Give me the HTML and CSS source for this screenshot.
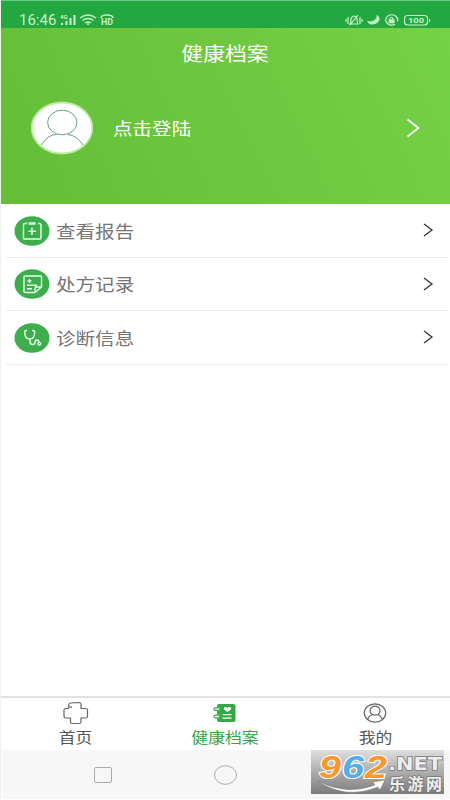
FILE: index.html
```html
<!DOCTYPE html>
<html lang="zh-CN">
<head>
<meta charset="utf-8">
<title>健康档案</title>
<link rel="stylesheet" href="styles.css">
</head>
<body>
<div class="screen">
  <div class="status">
    <span class="clock">16:46</span>
    <svg class="status-left" width="56" height="18" viewBox="0 0 56 18" fill="none" stroke="currentColor">
      <text class="tiny" x="0" y="7.500">4G</text>
      <path stroke-width="2" d="M2 14v-2M6.500 14v-4M10.500 14V7M14.500 14V4"/>
      <path stroke-width="1.400" d="M20 7q8-6 16 0M22.500 9.500q5.500-4 11 0M25 12q3-2 6 0"/>
      <path stroke-width="1.600" d="M41 7q0-3 6-3t6 3"/>
      <text class="hd" x="41" y="14.300" textLength="12" lengthAdjust="spacingAndGlyphs">HD</text>
      <circle cx="28" cy="13" r="1" fill="currentColor" stroke="none"/>
    </svg>
    <svg class="status-right" width="86" height="18" viewBox="0 0 86 18" fill="none" stroke="currentColor" stroke-width="1.200">
      <path d="M1 8v3M3 6v7M15 6v7M17 8v3M5 13q1-1 1-5 1-3 3-3t3 3q0 4 1 5zM5 14L13 4"/>
      <path fill="currentColor" stroke="none" d="M31.500 3.500q5 3.500 2 7-2.500 3.500-7.500 3-3-.5-4-3.500 4.500 1.300 7.500-1t2-5.500z"/>
      <path d="M50 13.300a6 5.200 0 1 1 2.500-3"/>
      <path fill="currentColor" stroke="none" d="M43.500 8.500h6v3.800h-6z"/><path d="M45 9V7.500q1.500-2.500 3 0V9"/>
      <rect x="59.500" y="4.500" width="23" height="9.500" rx="3"/><path d="M84.500 8v3"/>
      <text class="charge" x="63" y="12.200" textLength="16" lengthAdjust="spacingAndGlyphs">100</text>
    </svg>
  </div>
  <header class="hero">
    <h1 class="title"><span>健康档案</span></h1>
    <div class="login">
      <svg class="avatar" width="64" height="54" viewBox="0 0 64 54">
        <ellipse cx="32" cy="27" rx="30.300" ry="25.500" fill="#fff" stroke="#b9eba0" stroke-width="1.800"/>
        <g fill="none" stroke="#64a184" stroke-width="1"><ellipse cx="32.300" cy="21.500" rx="14.700" ry="12.300"/><path d="M11.500 44q6-10.500 15-10.500M38 33.500q9 1 15 10.500"/></g>
      </svg>
      <span class="login-text">点击登陆</span>
      <svg class="hero-arrow" width="14" height="20" viewBox="0 0 14 20"><path d="M1.500 1.500L12.500 10l-11 8.500"/></svg>
    </div>
  </header>
  <main class="list">
    <div class="row">
      <svg class="badge" width="36" height="30" viewBox="0 0 36 30"><ellipse cx="18" cy="15" rx="17.500" ry="14.700"/><path d="M13 7.500h-2.500q-1 0-1 1v13.500q0 1 1 1h15.500q1 0 1-1v-13.500q0-1-1-1H24M18 11.500v7.500M14.500 15.200h7.500"/><path class="thick" d="M14.500 7.500h7"/></svg>
      <span class="label">查看报告</span>
      <svg class="arrow" width="10" height="14" viewBox="0 0 10 14"><path d="M1 1l8 6-8 6"/></svg>
    </div>
    <div class="row">
      <svg class="badge" width="36" height="30" viewBox="0 0 36 30"><ellipse cx="18" cy="15" rx="17.500" ry="14.700"/><path d="M21 23.500H11q-1 0-1-1V8q0-1 1-1h15.500q1 0 1 1V18zM21 23.500v-4q0-1.500 1-1.500h5.500M13.500 12h4M15.500 10v4M13 16.300h10M13 19.800h5"/></svg>
      <span class="label">处方记录</span>
      <svg class="arrow" width="10" height="14" viewBox="0 0 10 14"><path d="M1 1l8 6-8 6"/></svg>
    </div>
    <div class="row">
      <svg class="badge" width="36" height="30" viewBox="0 0 36 30"><ellipse cx="18" cy="15" rx="17.500" ry="14.700"/><path d="M13 7.500h-1q-1.500 0-1.300 1.500 0 7 5 7t5-7q0-1.500-1.700-1.500h-1M16 16v2.500q0 3 2.500 3t2.500-2q0-2.500 2-2.500t2.300 2.500"/><circle cx="25.300" cy="20.700" r="1.300"/></svg>
      <span class="label">诊断信息</span>
      <svg class="arrow" width="10" height="14" viewBox="0 0 10 14"><path d="M1 1l8 6-8 6"/></svg>
    </div>
  </main>
  <nav class="tabs">
    <div class="tab">
      <svg width="26" height="24" viewBox="0 0 26 24" fill="none" stroke="#666" stroke-width="1.200"><path d="M9 6.200H5.700V3.700q0-1.500 1.800-1.700l8.500-.5q2 0 2 1.500v4.500h4.500q2 0 2 1.500v6.500q0 1.500-2 1.500H18v4q0 1.500-2 1.500H9.500q-2 0-2-1.500v-4H3q-2 0-2-1.500V9q0-1.500 2-1.500h3"/></svg>
      <span>首页</span>
    </div>
    <div class="tab active">
      <svg width="26" height="24" viewBox="0 0 26 24"><rect x="5" y="3" width="18.500" height="18" rx="2" fill="#35a846"/><g fill="none" stroke="#fff" stroke-width="3.500"><path d="M2 8.200h6M2 15.500h6"/></g><g fill="#fff" stroke="#35a846" stroke-width="1.200"><rect x="2" y="6.800" width="6" height="2.600" rx="1.300"/><rect x="2" y="14.200" width="6" height="2.600" rx="1.300"/></g><path d="M15.500 11L12 8.500Q11.300 6 13.500 6q1.500 0 2 1 .5-1 2-1 2.200 0 1.500 2.500z" fill="#fff"/><path d="M10.500 13.700h9M10.500 17.200h9" stroke="#fff" stroke-width="1.200"/></svg>
      <span>健康档案</span>
    </div>
    <div class="tab">
      <svg width="26" height="24" viewBox="0 0 26 24" fill="none" stroke="#666" stroke-width="1.200"><ellipse cx="13" cy="12" rx="10.700" ry="9.200"/><ellipse cx="13" cy="9.700" rx="5" ry="4.500"/><path d="M5.500 18.500q1.500-4 5-5M20.500 18.500q-1.500-4-5-5"/></svg>
      <span>我的</span>
    </div>
  </nav>
  <footer class="system">
    <svg width="18" height="16" viewBox="0 0 18 16"><rect x=".5" y=".5" width="17" height="15" rx="1.500"/></svg>
    <svg width="23" height="20" viewBox="0 0 23 20"><ellipse cx="11.500" cy="10" rx="11" ry="9.300"/></svg>
    <span></span>
  </footer>
  <svg class="watermark" width="133" height="44" viewBox="0 0 133 44">
    <defs><linearGradient id="plate" x2="0" y2="1"><stop stop-color="#dedede"/><stop offset="1" stop-color="#7c7c7c"/></linearGradient></defs>
    <rect width="133" height="44" fill="url(#plate)"/>
    <path d="M45 20l-15 8 15 6z" fill="none" stroke="#999"/>
    <path d="M7 31q28 15 57 4l-2-3 12-2-5 10-2-3Q34 50 7 31z" fill="#fff" stroke="#777" stroke-width=".5"/>
    <g class="digits"><text x="8" y="27.500" fill="#f7982c" textLength="22" lengthAdjust="spacingAndGlyphs">9</text><text x="31" y="27.500" fill="#58ace2" textLength="22" lengthAdjust="spacingAndGlyphs">6</text><text x="54" y="27.500" fill="#f7982c" textLength="22" lengthAdjust="spacingAndGlyphs">2</text></g>
    <text class="net" x="77" y="20" textLength="54" lengthAdjust="spacingAndGlyphs">.NET</text>
    <text class="site" x="78" y="39.500" textLength="53">乐游网</text>
  </svg>
</div>
</body>
</html>
```
FILE: styles.css
```css
* { box-sizing: border-box; }
body { margin: 0; background: #fff; font-family: "Noto Sans CJK SC", sans-serif; }
svg { display: block; flex: none; overflow: visible; }
.screen { position: relative; width: 450px; height: 800px; display: flex; flex-direction: column; overflow: hidden; border-left: 1px solid #e9f5e9; }
.status { height: 28px; flex: none; display: flex; align-items: flex-start; padding: 10px 19px 0 18px; background: #23a741; border-top: 1px solid #6bc980; color: #c9f3c6; }
.clock { font: 14px/18px Roboto, sans-serif; width: 38px; transform: scaleX(1.07); transform-origin: left; white-space: nowrap; margin-right: 3px; }
.status-right { margin-left: auto; }
.status text { fill: currentColor; stroke: none; font-family: Roboto, sans-serif; font-weight: 700; }
.status .tiny { font-size: 6px; }
.status .hd { font-size: 9px; }
.status .charge { font-size: 8px; }
.hero { height: 176px; flex: none; background: linear-gradient(65deg, #65bd38, #75d145); color: #fff; }
.title { margin: 0; height: 50px; display: flex; justify-content: center; font-size: 19px; line-height: 49px; font-weight: 400; }
.title span { transform: scaleX(1.15); }
.login { display: flex; align-items: center; height: 100px; padding: 0 30px 0 29px; }
.login-text { margin: 0 0 0 19px; font-size: 17px; line-height: 26px; transform: scaleX(1.15); transform-origin: left; }
.hero-arrow { margin-left: auto; }
.hero-arrow path { fill: none; stroke: #fff; stroke-width: 1.7; }
.list { flex: 1; padding: 0 1px 0 5px; }
.row { height: 53.5px; display: flex; align-items: center; padding: 0 16px 0 8px; border-bottom: 1px solid #ececec; }
.badge ellipse { fill: #3cae4b; }
.badge { margin-left: -.5px; margin-top: 1px; }
.badge path, .badge circle { fill: none; stroke: #e8ffe8; stroke-width: 1.4; }
.badge .thick { stroke-width: 2.4; }
.label { margin: 1px 0 0 6.5px; font-size: 17px; line-height: 26px; color: #757575; transform: scaleX(1.15); transform-origin: left; }
.arrow { margin-left: auto; }
.arrow path { fill: none; stroke: #333; stroke-width: 1.3; }
.tabs { height: 54px; flex: none; display: grid; grid-template-columns: repeat(3, 1fr); border-top: 2px solid #e2e2e2; }
.tab { display: flex; flex-direction: column; align-items: center; padding-top: 3px; color: #555; font-size: 14.5px; line-height: 24px; }
.tab span { transform: scaleX(1.16); white-space: nowrap; }
.tab.active { color: #35a346; }
.system { height: 50px; flex: none; display: grid; grid-template-columns: 54px 190px 1fr; justify-items: center; align-items: center; padding-left: 74px; background: #f7f7f7; margin-left: 1px; border-bottom: 1px solid #fff; }
.system svg { fill: none; stroke: #aaa; }
.watermark { position: absolute; left: 310px; top: 750px; }
.digits { font: italic 700 32px/1 "Liberation Sans", sans-serif; stroke: #fff; stroke-width: 2px; paint-order: stroke; }
.net { font: 700 18px "DejaVu Sans", sans-serif; fill: #eee; stroke: #777; stroke-width: 1.5px; paint-order: stroke; }
.site { font: 700 16px "Noto Sans CJK SC", sans-serif; fill: #eee; stroke: #777; stroke-width: 1.5px; paint-order: stroke; }
```
